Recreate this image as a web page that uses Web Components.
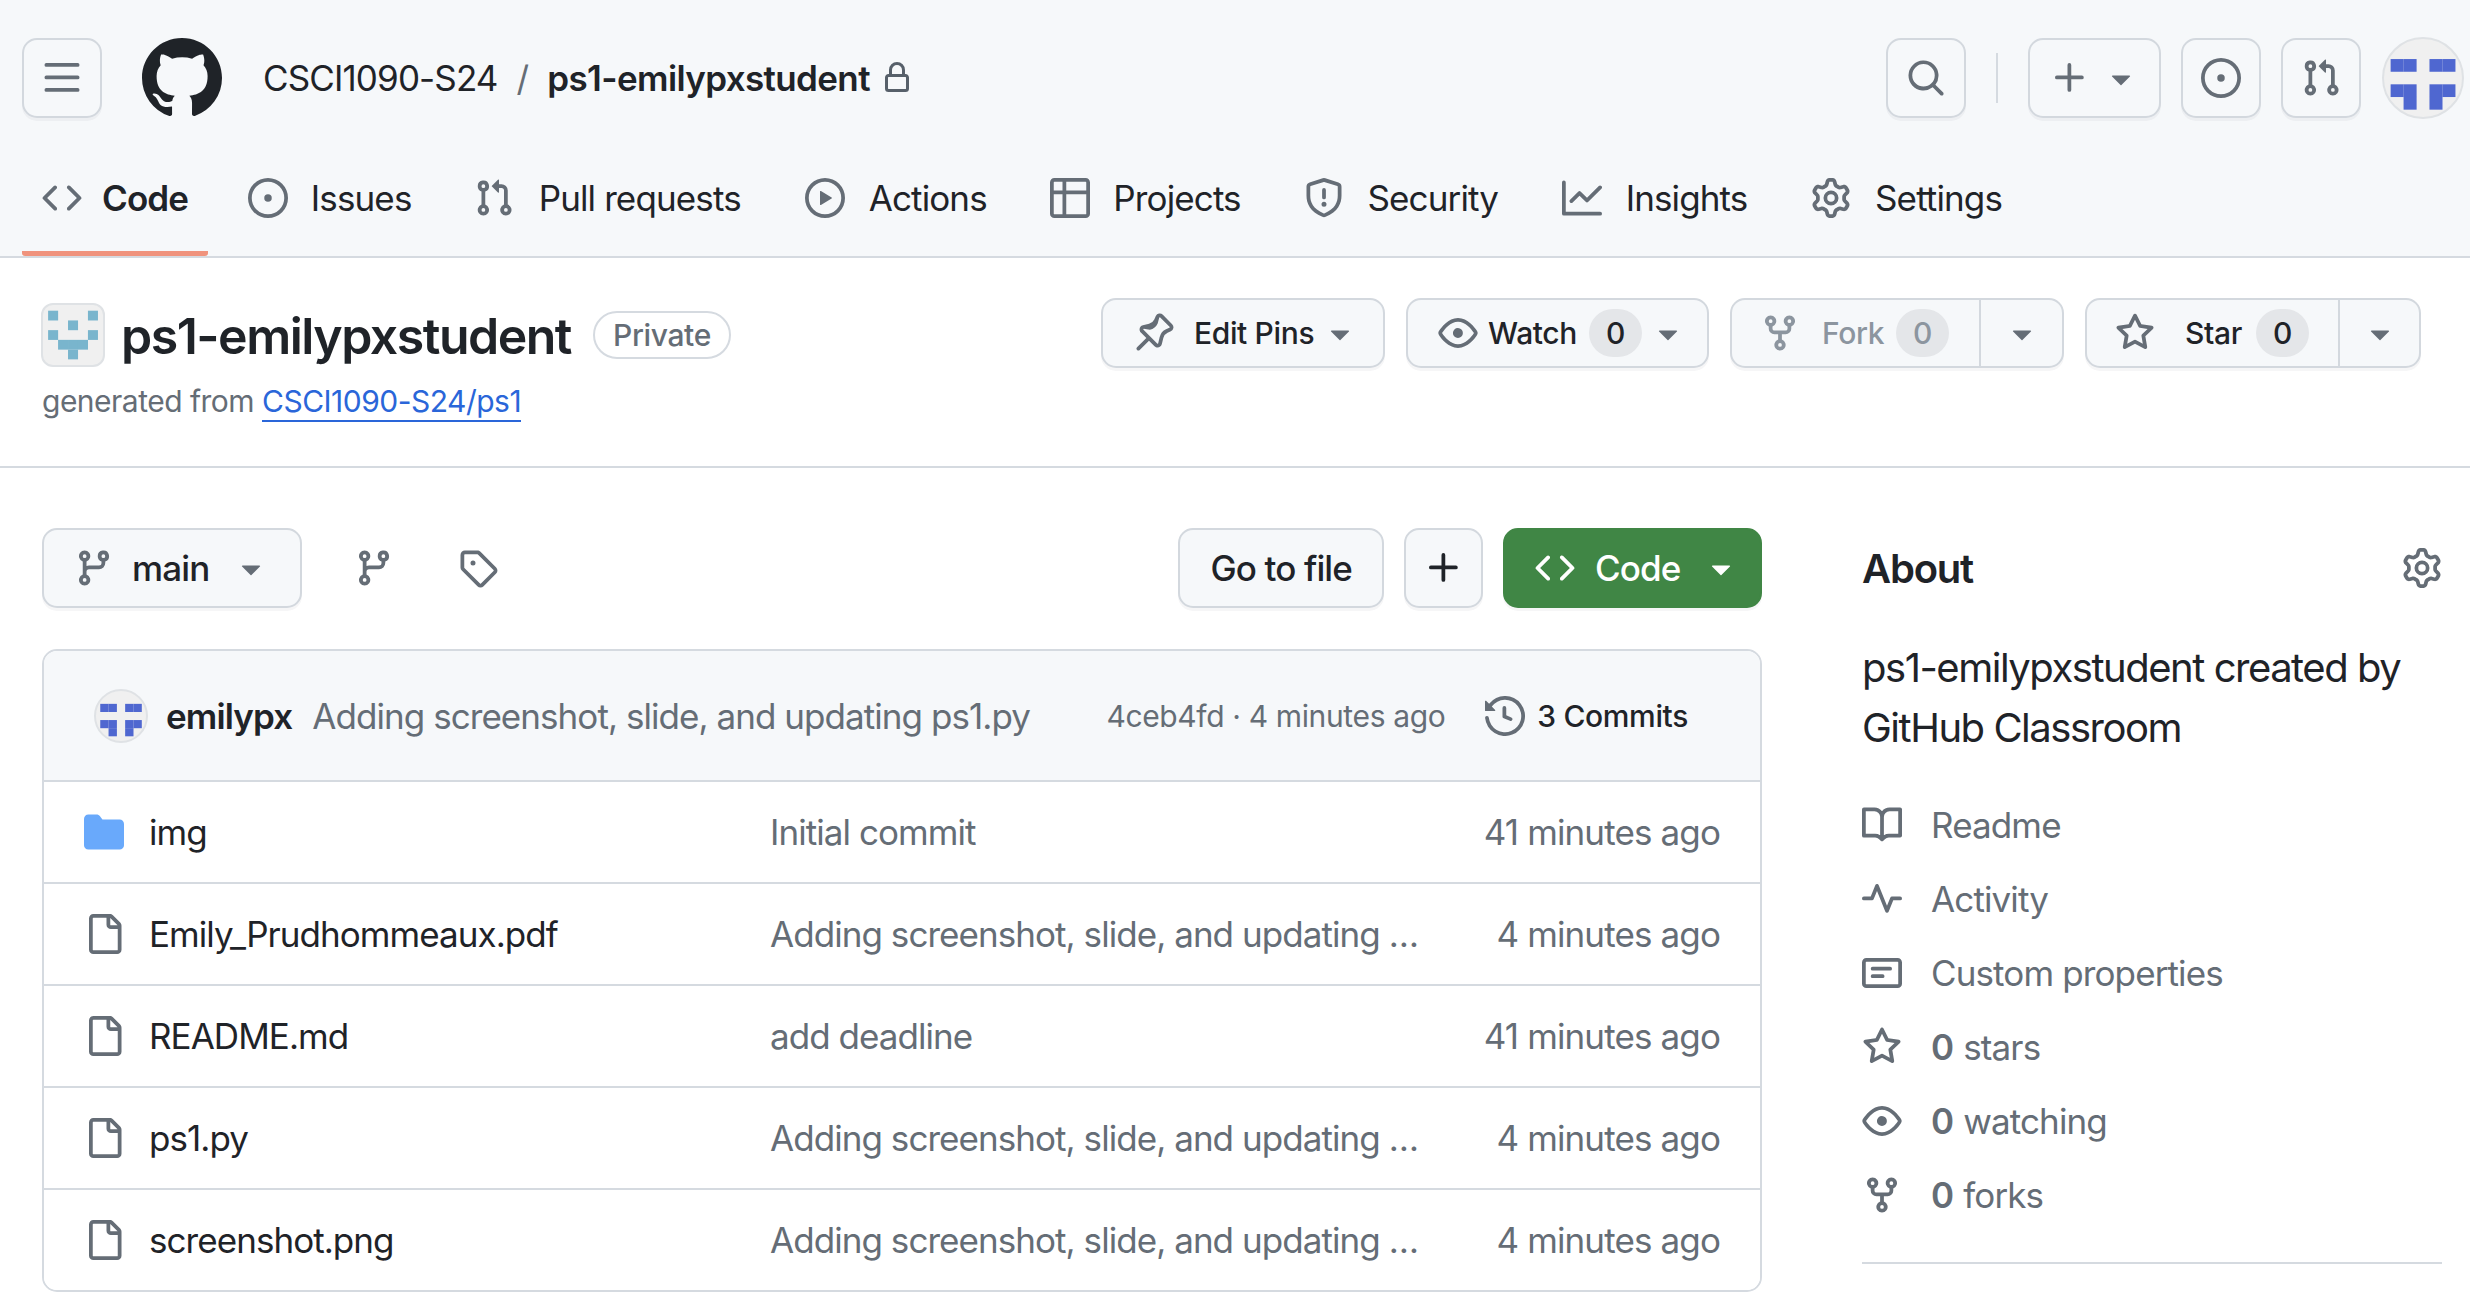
<!DOCTYPE html>
<html lang="en">
<head>
<meta charset="utf-8">
<title>ps1-emilypxstudent</title>
<style>
  html, body { margin: 0; height: 1304px; overflow: hidden; background: #fff; }
  body { font-family: Inter, "Liberation Sans", sans-serif; font-size: 35px; color: #1f2328; letter-spacing: -0.025em; }
</style>
</head>
<body>
<gh-header></gh-header>
<repo-head></repo-head>
<repo-main>
  <file-table slot="files">
    <file-row kind="dir" name="img" age="41 minutes ago">Initial commit</file-row>
    <file-row name="Emily_Prudhommeaux.pdf" age="4 minutes ago">Adding screenshot, slide, and updating …</file-row>
    <file-row name="README.md" age="41 minutes ago">add deadline</file-row>
    <file-row name="ps1.py" age="4 minutes ago">Adding screenshot, slide, and updating …</file-row>
    <file-row name="screenshot.png" age="4 minutes ago">Adding screenshot, slide, and updating …</file-row>
  </file-table>
  <about-panel slot="about">
    <about-row icon="book">Readme</about-row>
    <about-row icon="pulse">Activity</about-row>
    <about-row icon="note">Custom properties</about-row>
    <about-row icon="star" count="0">stars</about-row>
    <about-row icon="eye" count="0">watching</about-row>
    <about-row icon="fork" count="0">forks</about-row>
  </about-panel>
</repo-main>

<script>
// octicon paths, all on a 16x16 box
const ICONS = {
  bars: "M1 2.75A.75.75 0 0 1 1.75 2h12.5a.75.75 0 0 1 0 1.5H1.75A.75.75 0 0 1 1 2.75Zm0 5A.75.75 0 0 1 1.75 7h12.5a.75.75 0 0 1 0 1.5H1.75A.75.75 0 0 1 1 7.75ZM1.75 12h12.5a.75.75 0 0 1 0 1.5H1.75a.75.75 0 0 1 0-1.5Z",
  github: "M8 0c4.42 0 8 3.58 8 8a8.013 8.013 0 0 1-5.45 7.59c-.4.08-.55-.17-.55-.38 0-.27.01-1.13.01-2.2 0-.75-.25-1.23-.54-1.48 1.78-.2 3.65-.88 3.65-3.95 0-.88-.31-1.59-.82-2.15.08-.2.36-1.02-.08-2.12 0 0-.67-.22-2.2.82-.64-.18-1.32-.27-2-.27-.68 0-1.36.09-2 .27-1.53-1.03-2.2-.82-2.2-.82-.44 1.1-.16 1.92-.08 2.12-.51.56-.82 1.28-.82 2.15 0 3.06 1.86 3.75 3.64 3.95-.23.2-.44.55-.51 1.07-.46.21-1.61.55-2.33-.66-.15-.24-.6-.83-1.23-.82-.67.01-.27.38.01.53.34.19.73.9.82 1.13.16.45.68 1.31 2.69.94 0 .67.01 1.3.01 1.49 0 .21-.15.45-.55.38A7.995 7.995 0 0 1 0 8c0-4.42 3.58-8 8-8Z",
  lock: "M4 4a4 4 0 0 1 8 0v2h.25c.966 0 1.75.784 1.75 1.75v5.5A1.75 1.75 0 0 1 12.25 15h-8.5A1.75 1.75 0 0 1 2 13.25v-5.5C2 6.784 2.784 6 3.75 6H4Zm8.25 3.5h-8.5a.25.25 0 0 0-.25.25v5.5c0 .138.112.25.25.25h8.5a.25.25 0 0 0 .25-.25v-5.5a.25.25 0 0 0-.25-.25ZM10.5 6V4a2.5 2.5 0 1 0-5 0v2Z",
  code: "m11.28 3.22 4.25 4.25a.75.75 0 0 1 0 1.06l-4.25 4.25a.749.749 0 0 1-1.275-.326.749.749 0 0 1 .215-.734L13.94 8l-3.72-3.72a.749.749 0 0 1 .326-1.275.749.749 0 0 1 .734.215Zm-6.56 0a.751.751 0 0 1 1.042.018.751.751 0 0 1 .018 1.042L2.06 8l3.72 3.72a.749.749 0 0 1-.326 1.275.749.749 0 0 1-.734-.215L.47 8.53a.75.75 0 0 1 0-1.06Z",
  issue: "M8 9.5a1.5 1.5 0 1 0 0-3 1.5 1.5 0 0 0 0 3ZM8 0a8 8 0 1 1 0 16A8 8 0 0 1 8 0ZM1.5 8a6.5 6.5 0 1 0 13 0 6.5 6.5 0 0 0-13 0Z",
  pr: "M1.5 3.25a2.25 2.25 0 1 1 3 2.122v5.256a2.251 2.251 0 1 1-1.5 0V5.372A2.25 2.25 0 0 1 1.5 3.25Zm5.677-.177L9.573.677A.25.25 0 0 1 10 .854V2.5h1A2.5 2.5 0 0 1 13.5 5v5.628a2.251 2.251 0 1 1-1.5 0V5a1 1 0 0 0-1-1h-1v1.646a.25.25 0 0 1-.427.177L7.177 3.427a.25.25 0 0 1 0-.354ZM3.75 2.5a.75.75 0 1 0 0 1.5.75.75 0 0 0 0-1.5Zm0 9.5a.75.75 0 1 0 0 1.5.75.75 0 0 0 0-1.5Zm8.25.75a.75.75 0 1 0 1.5 0 .75.75 0 0 0-1.5 0Z",
  play: "M8 0a8 8 0 1 1 0 16A8 8 0 0 1 8 0ZM1.5 8a6.5 6.5 0 1 0 13 0 6.5 6.5 0 0 0-13 0Zm4.879-2.773 4.264 2.559a.25.25 0 0 1 0 .428l-4.264 2.559A.25.25 0 0 1 6 10.559V5.442a.25.25 0 0 1 .379-.215Z",
  table: "M0 1.75C0 .784.784 0 1.75 0h12.5C15.216 0 16 .784 16 1.75v12.5A1.75 1.75 0 0 1 14.25 16H1.75A1.75 1.75 0 0 1 0 14.25ZM6.5 6.5v8h7.75a.25.25 0 0 0 .25-.25V6.5Zm8-1.5V1.75a.25.25 0 0 0-.25-.25H6.5V5Zm-13 1.5v7.75c0 .138.112.25.25.25H5v-8ZM5 5V1.5H1.75a.25.25 0 0 0-.25.25V5Z",
  shield: "M7.467.133a1.748 1.748 0 0 1 1.066 0l5.25 1.68A1.75 1.75 0 0 1 15 3.48V7c0 1.566-.32 3.182-1.303 4.682-.983 1.498-2.585 2.813-5.032 3.855a1.697 1.697 0 0 1-1.33 0c-2.447-1.042-4.049-2.357-5.032-3.855C1.32 10.182 1 8.566 1 7V3.48a1.75 1.75 0 0 1 1.217-1.667Zm.61 1.429a.25.25 0 0 0-.153 0l-5.25 1.68a.25.25 0 0 0-.174.238V7c0 1.358.275 2.666 1.057 3.86.784 1.194 2.121 2.34 4.366 3.297a.196.196 0 0 0 .154 0c2.245-.956 3.582-2.104 4.366-3.298C13.225 9.666 13.5 8.36 13.5 7V3.48a.251.251 0 0 0-.174-.237l-5.25-1.68ZM8.75 4.75v3a.75.75 0 0 1-1.5 0v-3a.75.75 0 0 1 1.5 0ZM9 10.5a1 1 0 1 1-2 0 1 1 0 0 1 2 0Z",
  graph: "M1.5 1.75V13.5h13.75a.75.75 0 0 1 0 1.5H.75a.75.75 0 0 1-.75-.75V1.75a.75.75 0 0 1 1.5 0Zm14.28 2.53-5.25 5.25a.75.75 0 0 1-1.06 0L7 7.06 4.28 9.78a.751.751 0 0 1-1.042-.018.751.751 0 0 1-.018-1.042l3.25-3.25a.75.75 0 0 1 1.06 0L10 7.94l4.72-4.72a.751.751 0 0 1 1.042.018.751.751 0 0 1 .018 1.042Z",
  gear: "M8 0a8.2 8.2 0 0 1 .701.031C9.444.095 9.99.645 10.16 1.29l.288 1.107c.018.066.079.158.212.224.231.114.454.243.668.386.123.082.233.09.299.071l1.103-.303c.644-.176 1.392.021 1.82.63.27.385.506.792.704 1.218.315.675.111 1.422-.364 1.891l-.814.806c-.049.048-.098.147-.088.294.016.257.016.515 0 .772-.01.147.038.246.088.294l.814.806c.475.469.679 1.216.364 1.891a7.977 7.977 0 0 1-.704 1.217c-.428.61-1.176.807-1.82.63l-1.102-.302c-.067-.019-.177-.011-.3.071a5.909 5.909 0 0 1-.668.386c-.133.066-.194.158-.211.224l-.29 1.106c-.168.646-.715 1.196-1.458 1.26a8.006 8.006 0 0 1-1.402 0c-.743-.064-1.289-.614-1.458-1.26l-.289-1.106c-.018-.066-.079-.158-.212-.224a5.738 5.738 0 0 1-.668-.386c-.123-.082-.233-.09-.299-.071l-1.103.303c-.644.176-1.392-.021-1.82-.63a8.12 8.12 0 0 1-.704-1.218c-.315-.675-.111-1.422.363-1.891l.815-.806c.05-.048.098-.147.088-.294a6.214 6.214 0 0 1 0-.772c.01-.147-.038-.246-.088-.294l-.815-.806C.635 6.045.431 5.298.746 4.623a7.92 7.92 0 0 1 .704-1.217c.428-.61 1.176-.807 1.82-.63l1.102.302c.067.019.177.011.3-.071.214-.143.437-.272.668-.386.133-.066.194-.158.211-.224l.29-1.106C6.009.645 6.556.095 7.299.03 7.53.01 7.764 0 8 0Zm-.571 1.525c-.036.003-.108.036-.137.146l-.289 1.105c-.147.561-.549.967-.998 1.189-.173.086-.34.183-.5.29-.417.278-.97.423-1.529.27l-1.103-.303c-.109-.03-.175.016-.195.045-.22.312-.412.644-.573.99-.014.031-.021.11.059.19l.815.806c.411.406.562.957.53 1.456a4.709 4.709 0 0 0 0 .582c.032.499-.119 1.05-.53 1.456l-.815.806c-.081.08-.073.159-.059.19.162.346.353.677.573.989.02.03.085.076.195.046l1.102-.303c.56-.153 1.113-.008 1.53.27.161.107.328.204.501.29.447.222.85.629.997 1.189l.289 1.105c.029.109.101.143.137.146a6.6 6.6 0 0 0 1.142 0c.036-.003.108-.036.137-.146l.289-1.105c.147-.561.549-.967.998-1.189.173-.086.34-.183.5-.29.417-.278.97-.423 1.529-.27l1.103.303c.109.029.175-.016.195-.045.22-.313.411-.644.573-.99.014-.031.021-.11-.059-.19l-.815-.806c-.411-.406-.562-.957-.53-1.456a4.709 4.709 0 0 0 0-.582c-.032-.499.119-1.05.53-1.456l.815-.806c.081-.08.073-.159.059-.19a6.464 6.464 0 0 0-.573-.989c-.02-.03-.085-.076-.195-.046l-1.102.303c-.56.153-1.113.008-1.53-.27a4.44 4.44 0 0 0-.501-.29c-.447-.222-.85-.629-.997-1.189l-.289-1.105c-.029-.11-.101-.143-.137-.146a6.6 6.6 0 0 0-1.142 0ZM11 8a3 3 0 1 1-6 0 3 3 0 0 1 6 0ZM9.5 8a1.5 1.5 0 1 0-3.001.001A1.5 1.5 0 0 0 9.5 8Z",
  search: "M10.68 11.74a6 6 0 0 1-7.922-8.982 6 6 0 0 1 8.982 7.922l3.04 3.04a.749.749 0 0 1-.326 1.275.749.749 0 0 1-.734-.215ZM11.5 7a4.499 4.499 0 1 0-8.997 0A4.499 4.499 0 0 0 11.5 7Z",
  plus: "M7.75 2a.75.75 0 0 1 .75.75V7h4.25a.75.75 0 0 1 0 1.5H8.5v4.25a.75.75 0 0 1-1.5 0V8.5H2.75a.75.75 0 0 1 0-1.5H7V2.75A.75.75 0 0 1 7.75 2Z",
  caret: "m4.427 7.427 3.396 3.396a.25.25 0 0 0 .354 0l3.396-3.396A.25.25 0 0 0 11.396 7H4.604a.25.25 0 0 0-.177.427Z",
  pin: "M11.544.734a1.75 1.75 0 0 0-2.826.504l-.613 1.327a3.081 3.081 0 0 1-2.084 1.707l-2.454.584c-1.332.317-1.8 1.972-.832 2.94L4.94 10l-3.72 3.72a.75.75 0 0 0 1.061 1.06L6 11.06l2.204 2.205c.968.968 2.623.5 2.94-.832l.584-2.454a3.081 3.081 0 0 1 1.707-2.084l1.327-.613a1.75 1.75 0 0 0 .504-2.826ZM10.08 1.866a.25.25 0 0 1 .404-.072l3.722 3.722a.25.25 0 0 1-.072.404l-1.328.613a4.582 4.582 0 0 0-2.536 3.097l-.584 2.454a.25.25 0 0 1-.42.12l-5.47-5.47a.25.25 0 0 1 .12-.42L6.37 6.73a4.581 4.581 0 0 0 3.098-2.537Z",
  eye: "M8 2c1.981 0 3.671.992 4.933 2.078 1.27 1.091 2.187 2.345 2.637 3.023a1.62 1.62 0 0 1 0 1.798c-.45.678-1.367 1.932-2.637 3.023C11.67 13.008 9.981 14 8 14c-1.981 0-3.671-.992-4.933-2.078C1.797 10.83.88 9.576.43 8.898a1.62 1.62 0 0 1 0-1.798c.45-.677 1.367-1.931 2.637-3.022C4.33 2.992 6.019 2 8 2ZM1.679 7.932a.12.12 0 0 0 0 .136c.411.622 1.241 1.75 2.366 2.717C5.176 11.758 6.527 12.5 8 12.5c1.473 0 2.825-.742 3.955-1.715 1.124-.967 1.954-2.096 2.366-2.717a.12.12 0 0 0 0-.136c-.412-.621-1.242-1.75-2.366-2.717C10.824 4.242 9.473 3.5 8 3.5c-1.473 0-2.825.742-3.955 1.715-1.124.967-1.954 2.096-2.366 2.717ZM8 10a2 2 0 1 1-.001-3.999A2 2 0 0 1 8 10Z",
  fork: "M5 5.372v.878c0 .414.336.75.75.75h4.5a.75.75 0 0 0 .75-.75v-.878a2.25 2.25 0 1 1 1.5 0v.878a2.25 2.25 0 0 1-2.25 2.25h-1.5v2.128a2.251 2.251 0 1 1-1.5 0V8.5h-1.5A2.25 2.25 0 0 1 3.5 6.25v-.878a2.25 2.25 0 1 1 1.5 0ZM5 3.25a.75.75 0 1 0-1.5 0 .75.75 0 0 0 1.5 0Zm6.75.75a.75.75 0 1 0 0-1.5.75.75 0 0 0 0 1.5Zm-3 8.75a.75.75 0 1 0-1.5 0 .75.75 0 0 0 1.5 0Z",
  star: "M8 .25a.75.75 0 0 1 .673.418l1.882 3.815 4.21.612a.75.75 0 0 1 .416 1.279l-3.046 2.97.719 4.192a.751.751 0 0 1-1.088.791L8 12.347l-3.766 1.98a.75.75 0 0 1-1.088-.79l.72-4.194L.818 6.374a.75.75 0 0 1 .416-1.28l4.21-.611L7.327.668A.75.75 0 0 1 8 .25Zm0 2.445L6.615 5.5a.75.75 0 0 1-.564.41l-3.097.45 2.24 2.184a.75.75 0 0 1 .216.664l-.528 3.084 2.769-1.456a.75.75 0 0 1 .698 0l2.77 1.456-.53-3.084a.75.75 0 0 1 .216-.664l2.24-2.183-3.096-.45a.75.75 0 0 1-.564-.41L8 2.694Z",
  branch: "M9.5 3.25a2.25 2.25 0 1 1 3 2.122V6A2.5 2.5 0 0 1 10 8.5H6a1 1 0 0 0-1 1v1.128a2.251 2.251 0 1 1-1.5 0V5.372a2.25 2.25 0 1 1 1.5 0v1.836A2.493 2.493 0 0 1 6 7h4a1 1 0 0 0 1-1v-.628A2.25 2.25 0 0 1 9.5 3.25Zm-6 0a.75.75 0 1 0 1.5 0 .75.75 0 0 0-1.5 0Zm8.25-.75a.75.75 0 1 0 0 1.5.75.75 0 0 0 0-1.5ZM4.25 12a.75.75 0 1 0 0 1.5.75.75 0 0 0 0-1.5Z",
  tag: "M1 7.775V2.75C1 1.784 1.784 1 2.75 1h5.025c.464 0 .91.184 1.238.513l6.25 6.25a1.75 1.75 0 0 1 0 2.474l-5.026 5.026a1.75 1.75 0 0 1-2.474 0l-6.25-6.25A1.752 1.752 0 0 1 1 7.775Zm1.5 0c0 .066.026.13.073.177l6.25 6.25a.25.25 0 0 0 .354 0l5.025-5.025a.25.25 0 0 0 0-.354l-6.25-6.25a.25.25 0 0 0-.177-.073H2.75a.25.25 0 0 0-.25.25ZM6 5a1 1 0 1 1 0 2 1 1 0 0 1 0-2Z",
  history: "m.427 1.927 1.215 1.215a8.002 8.002 0 1 1-1.6 5.685.75.75 0 1 1 1.493-.154 6.5 6.5 0 1 0 1.18-4.458l1.358 1.358A.25.25 0 0 1 3.896 6H.25A.25.25 0 0 1 0 5.75V2.104a.25.25 0 0 1 .427-.177ZM7.75 4a.75.75 0 0 1 .75.75v2.992l2.028.812a.75.75 0 0 1-.557 1.392l-2.5-1A.751.751 0 0 1 7 8.25v-3.5A.75.75 0 0 1 7.75 4Z",
  folder: "M1.75 1A1.75 1.75 0 0 0 0 2.75v10.5C0 14.216.784 15 1.75 15h12.5A1.75 1.75 0 0 0 16 13.25v-8.5A1.75 1.75 0 0 0 14.25 3H7.5a.25.25 0 0 1-.2-.1l-.9-1.2C6.07 1.26 5.55 1 5 1H1.75Z",
  file: "M2 1.75C2 .784 2.784 0 3.75 0h6.586c.464 0 .909.184 1.237.513l2.914 2.914c.329.328.513.773.513 1.237v9.586A1.75 1.75 0 0 1 13.25 16h-9.5A1.75 1.75 0 0 1 2 14.25Zm1.75-.25a.25.25 0 0 0-.25.25v12.5c0 .138.112.25.25.25h9.5a.25.25 0 0 0 .25-.25V6h-2.75A1.75 1.75 0 0 1 9 4.25V1.5Zm6.75.062V4.25c0 .138.112.25.25.25h2.688l-.011-.013-2.914-2.914-.013-.011Z",
  book: "M0 1.75A.75.75 0 0 1 .75 1h4.253c1.227 0 2.317.59 3 1.501A3.743 3.743 0 0 1 11.006 1h4.245a.75.75 0 0 1 .75.75v10.5a.75.75 0 0 1-.75.75h-4.507a2.25 2.25 0 0 0-1.591.659l-.622.621a.75.75 0 0 1-1.06 0l-.622-.621A2.25 2.25 0 0 0 5.258 13H.75a.75.75 0 0 1-.75-.75Zm7.251 10.324.004-5.073-.002-2.253A2.25 2.25 0 0 0 5.003 2.5H1.5v9h3.757a3.75 3.75 0 0 1 1.994.574ZM8.755 4.75l-.004 7.322a3.752 3.752 0 0 1 1.992-.572H14.5v-9h-3.495a2.25 2.25 0 0 0-2.25 2.25Z",
  pulse: "M6 2c.306 0 .582.187.696.471L10 10.731l1.304-3.26A.751.751 0 0 1 12 7h3.25a.75.75 0 0 1 0 1.5h-2.742l-1.812 4.528a.751.751 0 0 1-1.392 0L6 4.77 4.696 8.03A.75.75 0 0 1 4 8.5H.75a.75.75 0 0 1 0-1.5h2.742l1.812-4.529A.751.751 0 0 1 6 2Z",
  note: "M0 3.75C0 2.784.784 2 1.75 2h12.5c.966 0 1.75.784 1.75 1.75v8.5A1.75 1.75 0 0 1 14.25 14H1.75A1.75 1.75 0 0 1 0 12.25Zm1.75-.25a.25.25 0 0 0-.25.25v8.5c0 .138.112.25.25.25h12.5a.25.25 0 0 0 .25-.25v-8.5a.25.25 0 0 0-.25-.25ZM3.5 6.25a.75.75 0 0 1 .75-.75h7a.75.75 0 0 1 0 1.5h-7a.75.75 0 0 1-.75-.75Zm.75 2.25h4a.75.75 0 0 1 0 1.5h-4a.75.75 0 0 1 0-1.5Z"
};

class GhIcon extends HTMLElement {
  connectedCallback() {
    const size = this.getAttribute("size") || 40;
    this.attachShadow({ mode: "open" }).innerHTML = `
      <style>
        :host { display: inline-flex; flex: none; color: var(--icon-color, #656d76); }
        svg { display: block; fill: currentColor; }
      </style>
      <svg width="${size}" height="${size}" viewBox="0 0 16 16"><path fill-rule="evenodd" d="${ICONS[this.getAttribute("name")]}"/></svg>`;
  }
}

// blocky generated avatar, cells are column,row pairs on a 5x5 grid
class GhIdenticon extends HTMLElement {
  connectedCallback() {
    const size = this.getAttribute("size");
    const color = this.getAttribute("color");
    const cells = this.getAttribute("cells").split(" ").map((c) => c.split(","));
    const rects = cells.map(([c, r]) => `<rect x="${8.5 + c * 16.6}" y="${9.5 + r * 16.2}" width="16.7" height="16.3"/>`).join("");
    this.attachShadow({ mode: "open" }).innerHTML = `
      <style>
        :host { display: inline-flex; flex: none; }
        svg { display: block; background: #f0f0f0; border: 2px solid #dfe2e5; box-sizing: border-box; border-radius: var(--radius, 50%); }
      </style>
      <svg width="${size}" height="${size}" viewBox="0 0 100 100" fill="${color}">${rects}</svg>`;
  }
}

class GhButton extends HTMLElement {
  connectedCallback() {
    this.attachShadow({ mode: "open" }).innerHTML = `
      <style>
        :host {
          display: inline-flex; align-items: center; box-sizing: border-box;
          height: var(--h, 80px); padding: var(--pad, 0 20px); gap: var(--gap, 20px);
          font-size: var(--fs, 35px); font-weight: 500; color: var(--fg, #1f2328);
          letter-spacing: var(--ls, -0.025em);
          background: var(--bg, #f6f8fa); border: 2px solid var(--bd, #d3d8de); border-radius: 15px;
          box-shadow: 0 3px 0 rgba(31, 35, 40, .04); white-space: nowrap;
        }
      </style>
      <slot></slot>`;
  }
}

// the little grey pill beside Watch, Fork and Star
class CountPill extends HTMLElement {
  connectedCallback() {
    this.attachShadow({ mode: "open" }).innerHTML = `
      <style>
        :host {
          display: inline-flex; flex: none; align-items: center; justify-content: center;
          width: 53px; height: 48px; border-radius: 24px; background: #e4e6e9;
          font-size: 30px; font-weight: 500;
        }
      </style>
      <slot></slot>`;
  }
}

class SplitButton extends HTMLElement {
  connectedCallback() {
    this.attachShadow({ mode: "open" }).innerHTML = `
      <style>
        :host {
          display: inline-flex; box-sizing: border-box; height: 70px;
          background: #f6f8fa; border: 2px solid #d3d8de; border-radius: 15px;
          box-shadow: 0 3px 0 rgba(31, 35, 40, .04);
          font-size: 30px; font-weight: 500; letter-spacing: -0.012em; color: var(--fg, #1f2328);
        }
        .main { display: flex; align-items: center; width: var(--main-w); box-sizing: border-box; padding-left: 28px; border-right: 2px solid #d3d8de; }
        .more { display: flex; align-items: center; justify-content: center; width: var(--more-w); }
        ::slotted([slot=more]) { --icon-color: #656d76; }
      </style>
      <div class="main"><slot></slot></div>
      <div class="more"><slot name="more"></slot></div>`;
  }
}

class NavTab extends HTMLElement {
  connectedCallback() {
    const selected = this.hasAttribute("selected");
    this.attachShadow({ mode: "open" }).innerHTML = `
      <style>
        :host {
          display: inline-flex; align-items: center; gap: 20px; box-sizing: border-box;
          height: 116px; padding: 0 20px;
          border-top: 5px solid transparent;
          border-bottom: 5px solid ${selected ? "#f0937d" : "transparent"};
          border-radius: 3px;
          font-size: 35px; font-weight: ${selected ? 600 : 400}; color: #1f2328;
        }
        .label { text-align: center; }
        .label::after {
          content: attr(data-text); display: block; height: 0; overflow: hidden;
          visibility: hidden; font-weight: ${selected ? 600 : 700};
        }
      </style>
      <gh-icon name="${this.getAttribute("icon")}"></gh-icon>
      <span class="label" data-text="${this.textContent}"><slot></slot></span>`;
  }
}

class GhHeader extends HTMLElement {
  connectedCallback() {
    this.attachShadow({ mode: "open" }).innerHTML = `
      <style>
        :host {
          display: block; box-sizing: border-box; height: 258px; padding-top: 38px;
          background: #f6f8fa; border-bottom: 2px solid #d5dae0;
        }
        .top { display: flex; align-items: center; height: 80px; padding: 0 6px 0 22px; font-size: 35px; }
        .square { --pad: 0; width: 80px; justify-content: center; }
        .logo { margin: 0 41px 0 40px; --icon-color: #1f2328; }
        .slash { margin: 0 19px; color: #656d76; }
        .repo { font-weight: 600; letter-spacing: -0.018em; }
        .lock { margin-left: 11px; --icon-color: #57606a; }
        .right { margin-left: auto; display: flex; align-items: center; gap: 20px; }
        .rule { width: 2px; height: 50px; background: #d5dae0; margin: 0 10px; }
        .new { --pad: 0 0 0 20px; --gap: 11px; width: 133px; }
        .avatar { margin-left: 1px; }
        nav { display: flex; gap: 20px; padding-left: 22px; margin-top: 22px; }
      </style>
      <div class="top">
        <gh-button class="square"><gh-icon name="bars"></gh-icon></gh-button>
        <gh-icon class="logo" name="github" size="80"></gh-icon>
        <span>CSCI1090-S24</span><span class="slash">/</span><span class="repo">ps1-emilypxstudent</span>
        <gh-icon class="lock" name="lock" size="32"></gh-icon>
        <div class="right">
          <gh-button class="square"><gh-icon name="search"></gh-icon></gh-button>
          <div class="rule"></div>
          <gh-button class="new"><gh-icon name="plus"></gh-icon><gh-icon name="caret"></gh-icon></gh-button>
          <gh-button class="square"><gh-icon name="issue"></gh-icon></gh-button>
          <gh-button class="square"><gh-icon name="pr"></gh-icon></gh-button>
          <gh-identicon class="avatar" size="82" color="#4f67d0" cells="0,1 1,1 3,1 4,1 0,3 1,3 3,3 4,3 1,4 3,4"></gh-identicon>
        </div>
      </div>
      <nav>
        <nav-tab icon="code" selected>Code</nav-tab>
        <nav-tab icon="issue">Issues</nav-tab>
        <nav-tab icon="pr">Pull requests</nav-tab>
        <nav-tab icon="play">Actions</nav-tab>
        <nav-tab icon="table">Projects</nav-tab>
        <nav-tab icon="shield">Security</nav-tab>
        <nav-tab icon="graph">Insights</nav-tab>
        <nav-tab icon="gear">Settings</nav-tab>
      </nav>`;
  }
}

class RepoHead extends HTMLElement {
  connectedCallback() {
    this.attachShadow({ mode: "open" }).innerHTML = `
      <style>
        :host {
          display: flex; justify-content: space-between; box-sizing: border-box; height: 210px;
          padding: 40px 49px 0 41px; border-bottom: 2px solid #d5dae0;
        }
        .title { display: flex; align-items: center; height: 64px; margin-top: 5px; }
        .repo-pic { --radius: 12px; }
        h1 { margin: 2px 22px 0 16px; font-size: 50px; font-weight: 600; line-height: 64px; letter-spacing: -0.03em; }
        .label {
          display: inline-flex; align-items: center; height: 48px; padding: 0 18px; box-sizing: border-box;
          border: 2px solid #d5dae0; border-radius: 24px; font-size: 30px; font-weight: 500; letter-spacing: -0.012em; color: #656d76;
        }
        .from { margin: 11px 0 0 1px; font-size: 30px; letter-spacing: -0.017em; color: #656d76; line-height: 46px; }
        .from span { color: #2a66d9; border-bottom: 2px solid #2a66d9; display: inline-block; line-height: 38px; }
        .actions { display: flex; gap: 21px; --ls: -0.012em; }
        .pin-btn { --h: 70px; --fs: 30px; --pad: 0 0 0 31px; --gap: 20px; width: 284px; }
        .pin-btn .caret { margin-left: -14px; }
        .watch-btn { --h: 70px; --fs: 30px; --pad: 0 0 0 30px; --gap: 10px; width: 303px; }
        .watch-btn count-pill { margin-left: 2px; }
        .watch-btn .caret { margin-left: -4px; }
        .dim { --fg: #8c959f; --icon-color: #8c959f; }
        .fork-btn { --main-w: 249px; --more-w: 81px; }
        .star-btn { --main-w: 253px; --more-w: 79px; }
        .fork-btn .lead { margin-right: 22px; }
        .star-btn .lead { margin-right: 30px; }
        split-button count-pill { margin-left: 14px; }
        .fork-btn count-pill { margin-left: 12px; }
      </style>
      <div>
        <div class="title">
          <gh-identicon class="repo-pic" size="64" color="#79b5cd" cells="0,0 4,0 2,1 0,2 4,2 1,3 2,3 3,3 2,4"></gh-identicon>
          <h1>ps1-emilypxstudent</h1>
          <span class="label">Private</span>
        </div>
        <div class="from">generated from <span>CSCI1090-S24/ps1</span></div>
      </div>
      <div class="actions">
        <gh-button class="pin-btn"><gh-icon name="pin"></gh-icon>Edit Pins<gh-icon class="caret" name="caret"></gh-icon></gh-button>
        <gh-button class="watch-btn"><gh-icon name="eye"></gh-icon>Watch<count-pill>0</count-pill><gh-icon class="caret" name="caret"></gh-icon></gh-button>
        <split-button class="fork-btn dim">
          <gh-icon class="lead" name="fork"></gh-icon>Fork<count-pill>0</count-pill>
          <gh-icon slot="more" name="caret"></gh-icon>
        </split-button>
        <split-button class="star-btn">
          <gh-icon class="lead" name="star"></gh-icon>Star<count-pill>0</count-pill>
          <gh-icon slot="more" name="caret"></gh-icon>
        </split-button>
      </div>`;
  }
}

class RepoMain extends HTMLElement {
  connectedCallback() {
    this.attachShadow({ mode: "open" }).innerHTML = `
      <style>
        :host { display: grid; grid-template-columns: 1720px 580px; column-gap: 100px; padding: 60px 0 0 42px; }
        .bar { display: flex; align-items: center; gap: 20px; height: 80px; margin-bottom: 41px; }
        .branch { --pad: 0 0 0 30px; width: 260px; }
        .branch .name { margin: 0 2px 0 -2px; }
        .plain { margin-left: 32px; }
        .tag { margin-left: 44px; }
        .push { margin-left: auto; }
        .file { --pad: 0 30px; }
        .add { --pad: 0; width: 79px; justify-content: center; --icon-color: #1f2328; }
        .green { --bg: #408645; --bd: #408645; --fg: #fff; --icon-color: #fff; --pad: 0 0 0 30px; --gap: 20px; width: 259px; }
      </style>
      <div>
        <div class="bar">
          <gh-button class="branch"><gh-icon name="branch"></gh-icon><span class="name">main</span><gh-icon name="caret"></gh-icon></gh-button>
          <gh-icon class="plain" name="branch"></gh-icon>
          <gh-icon class="tag" name="tag"></gh-icon>
          <gh-button class="file push">Go to file</gh-button>
          <gh-button class="add"><gh-icon name="plus"></gh-icon></gh-button>
          <gh-button class="green"><gh-icon name="code"></gh-icon>Code<gh-icon name="caret"></gh-icon></gh-button>
        </div>
        <slot name="files"></slot>
      </div>
      <slot name="about"></slot>`;
  }
}

class FileTable extends HTMLElement {
  connectedCallback() {
    this.attachShadow({ mode: "open" }).innerHTML = `
      <style>
        :host { display: block; border: 2px solid #d5dae0; border-radius: 15px; overflow: hidden; }
        .commit {
          display: flex; align-items: center; box-sizing: border-box; height: 131px; padding: 0 72px 0 50px;
          background: #f6f8fa; border-bottom: 2px solid #d5dae0;
        }
        .who { margin: 0 20px 0 18px; font-weight: 600; }
        .msg { color: #656d76; letter-spacing: -0.027em; }
        .meta { margin-left: auto; font-size: 30px; letter-spacing: -0.012em; color: #656d76; }
        .hist { margin: 0 12px 0 40px; }
        .count { font-size: 30px; font-weight: 500; letter-spacing: -0.012em; }
      </style>
      <div class="commit">
        <gh-identicon size="54" color="#4f67d0" cells="0,1 1,1 3,1 4,1 0,3 1,3 3,3 4,3 1,4 3,4"></gh-identicon>
        <span class="who">emilypx</span>
        <span class="msg">Adding screenshot, slide, and updating ps1.py</span>
        <span class="meta">4ceb4fd · 4 minutes ago</span>
        <gh-icon class="hist" name="history"></gh-icon>
        <span class="count">3 Commits</span>
      </div>
      <slot></slot>`;
  }
}

class FileRow extends HTMLElement {
  connectedCallback() {
    const dir = this.getAttribute("kind") === "dir";
    this.attachShadow({ mode: "open" }).innerHTML = `
      <style>
        :host(:not(:last-child)) { border-bottom: 2px solid #d5dae0; }
        :host(:last-child) { height: 100px; }
        :host {
          display: grid; grid-template-columns: 40px 646px 1fr auto; align-items: center;
          box-sizing: border-box; height: 102px; padding: 0 40px 0 40px;
          background: #fff; letter-spacing: -0.027em;
        }
        .icon { --icon-color: ${dir ? "#69a9fb" : "#656d76"}; }
        .name { padding-left: 25px; }
        .msg { color: #656d76; margin-right: -1px; }
        .age { color: #656d76; letter-spacing: -0.025em; }
      </style>
      <gh-icon class="icon" name="${dir ? "folder" : "file"}"></gh-icon>
      <span class="name">${this.getAttribute("name")}</span>
      <span class="msg"><slot></slot></span>
      <span class="age">${this.getAttribute("age")}</span>`;
  }
}

class AboutPanel extends HTMLElement {
  connectedCallback() {
    this.attachShadow({ mode: "open" }).innerHTML = `
      <style>
        :host { display: block; }
        .head { display: flex; align-items: center; justify-content: space-between; height: 80px; }
        h2 { margin: 0; font-size: 40px; font-weight: 600; letter-spacing: -0.03em; }
        p { margin: 30px 0 30px; font-size: 40px; line-height: 60px; letter-spacing: -0.037em; }
        hr { margin: 30px 0 0; border: 0; border-top: 2px solid #d5dae0; }
      </style>
      <div class="head"><h2>About</h2><gh-icon name="gear"></gh-icon></div>
      <p>ps1-emilypxstudent created by GitHub Classroom</p>
      <slot></slot>
      <hr>`;
  }
}

class AboutRow extends HTMLElement {
  connectedCallback() {
    const count = this.getAttribute("count");
    this.attachShadow({ mode: "open" }).innerHTML = `
      <style>
        :host { display: flex; align-items: center; gap: 29px; height: 74px; color: #656d76; font-size: 35px; }
        b { font-weight: 600; margin-right: 10px; }
      </style>
      <gh-icon name="${this.getAttribute("icon")}"></gh-icon>
      <span>${count ? `<b>${count}</b>` : ""}<slot></slot></span>`;
  }
}

customElements.define("gh-icon", GhIcon);
customElements.define("gh-identicon", GhIdenticon);
customElements.define("gh-button", GhButton);
customElements.define("count-pill", CountPill);
customElements.define("split-button", SplitButton);
customElements.define("nav-tab", NavTab);
customElements.define("gh-header", GhHeader);
customElements.define("repo-head", RepoHead);
customElements.define("repo-main", RepoMain);
customElements.define("file-table", FileTable);
customElements.define("file-row", FileRow);
customElements.define("about-panel", AboutPanel);
customElements.define("about-row", AboutRow);
</script>
</body>
</html>
